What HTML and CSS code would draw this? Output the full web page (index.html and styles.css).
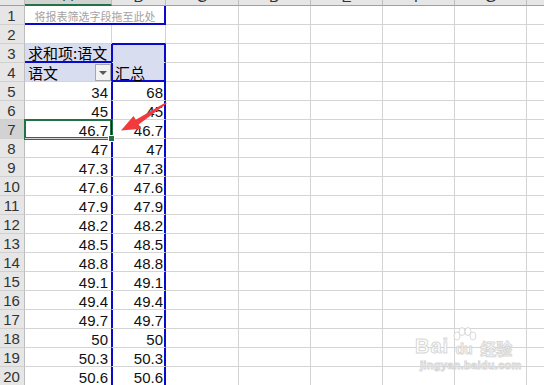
FILE: index.html
```html
<!DOCTYPE html>
<html lang="zh">
<head>
<meta charset="utf-8">
<link rel="stylesheet" href="styles.css">
</head>
<body>
<div class="page">
  <div class="sheet">
    <div class="c corner"></div>
    <div class="c ch sel">A</div><div class="c ch">B</div><div class="c ch">C</div><div class="c ch">D</div><div class="c ch">E</div><div class="c ch">F</div><div class="c ch">G</div><div class="c ch">H</div>

    <div class="c rh">1</div>
    <div class="c filter">将报表筛选字段拖至此处</div>
    <div class="c"></div><div class="c"></div><div class="c"></div><div class="c"></div><div class="c"></div><div class="c"></div>

    <div class="c rh">2</div>
    <div class="c"></div><div class="c b2"></div>
    <div class="c"></div><div class="c"></div><div class="c"></div><div class="c"></div><div class="c"></div><div class="c"></div>

    <div class="c rh">3</div>
    <div class="c a3 txt">求和项:语文</div><div class="c b3"></div>
    <div class="c"></div><div class="c"></div><div class="c"></div><div class="c"></div><div class="c"></div><div class="c"></div>

    <div class="c rh">4</div>
    <div class="c a4 txt">语文<span class="dd"><span class="tri"></span></span></div><div class="c b4 txt">汇总</div>
    <div class="c"></div><div class="c"></div><div class="c"></div><div class="c"></div><div class="c"></div><div class="c"></div>

    <div class="c rh">5</div>
    <div class="c num pa">34</div><div class="c num pb">68</div>
    <div class="c"></div><div class="c"></div><div class="c"></div><div class="c"></div><div class="c"></div><div class="c"></div>

    <div class="c rh">6</div>
    <div class="c num pa">45</div><div class="c num pb">45</div>
    <div class="c"></div><div class="c"></div><div class="c"></div><div class="c"></div><div class="c"></div><div class="c"></div>

    <div class="c rh cur">7</div>
    <div class="c num pa active">46.7</div><div class="c num pb">46.7</div>
    <div class="c"></div><div class="c"></div><div class="c"></div><div class="c"></div><div class="c"></div><div class="c"></div>

    <div class="c rh">8</div>
    <div class="c num pa">47</div><div class="c num pb">47</div>
    <div class="c"></div><div class="c"></div><div class="c"></div><div class="c"></div><div class="c"></div><div class="c"></div>

    <div class="c rh">9</div>
    <div class="c num pa">47.3</div><div class="c num pb">47.3</div>
    <div class="c"></div><div class="c"></div><div class="c"></div><div class="c"></div><div class="c"></div><div class="c"></div>

    <div class="c rh">10</div>
    <div class="c num pa">47.6</div><div class="c num pb">47.6</div>
    <div class="c"></div><div class="c"></div><div class="c"></div><div class="c"></div><div class="c"></div><div class="c"></div>

    <div class="c rh">11</div>
    <div class="c num pa">47.9</div><div class="c num pb">47.9</div>
    <div class="c"></div><div class="c"></div><div class="c"></div><div class="c"></div><div class="c"></div><div class="c"></div>

    <div class="c rh">12</div>
    <div class="c num pa">48.2</div><div class="c num pb">48.2</div>
    <div class="c"></div><div class="c"></div><div class="c"></div><div class="c"></div><div class="c"></div><div class="c"></div>

    <div class="c rh">13</div>
    <div class="c num pa">48.5</div><div class="c num pb">48.5</div>
    <div class="c"></div><div class="c"></div><div class="c"></div><div class="c"></div><div class="c"></div><div class="c"></div>

    <div class="c rh">14</div>
    <div class="c num pa">48.8</div><div class="c num pb">48.8</div>
    <div class="c"></div><div class="c"></div><div class="c"></div><div class="c"></div><div class="c"></div><div class="c"></div>

    <div class="c rh">15</div>
    <div class="c num pa">49.1</div><div class="c num pb">49.1</div>
    <div class="c"></div><div class="c"></div><div class="c"></div><div class="c"></div><div class="c"></div><div class="c"></div>

    <div class="c rh">16</div>
    <div class="c num pa">49.4</div><div class="c num pb">49.4</div>
    <div class="c"></div><div class="c"></div><div class="c"></div><div class="c"></div><div class="c"></div><div class="c"></div>

    <div class="c rh">17</div>
    <div class="c num pa">49.7</div><div class="c num pb">49.7</div>
    <div class="c"></div><div class="c"></div><div class="c"></div><div class="c"></div><div class="c"></div><div class="c"></div>

    <div class="c rh">18</div>
    <div class="c num pa">50</div><div class="c num pb">50</div>
    <div class="c"></div><div class="c"></div><div class="c"></div><div class="c"></div><div class="c"></div><div class="c"></div>

    <div class="c rh">19</div>
    <div class="c num pa">50.3</div><div class="c num pb">50.3</div>
    <div class="c"></div><div class="c"></div><div class="c"></div><div class="c"></div><div class="c"></div><div class="c"></div>

    <div class="c rh">20</div>
    <div class="c num pa">50.6</div><div class="c num pb">50.6</div>
    <div class="c"></div><div class="c"></div><div class="c"></div><div class="c"></div><div class="c"></div><div class="c"></div>
  </div>

  <svg class="arrow" width="544" height="385" viewBox="0 0 544 385">
    <polygon points="121,130.5 133.5,116 135.8,119.8 166,102.3 166.6,103.8 138.6,124.4 141.5,128.8" fill="#f03a3b"/>
  </svg>

  <div class="wm">
    <div class="wm-top">
      <span class="wm-bai">Bai</span>
      <span class="wm-paw">
        <svg width="28" height="18" viewBox="0 0 28 18">
          <ellipse cx="7" cy="9" rx="3" ry="4" fill="#fff" stroke="#d6d6d6"/>
          <ellipse cx="12" cy="4.5" rx="3" ry="4" fill="#fff" stroke="#d6d6d6"/>
          <ellipse cx="18" cy="4.5" rx="3" ry="4" fill="#fff" stroke="#d6d6d6"/>
          <ellipse cx="23" cy="9" rx="3" ry="4" fill="#fff" stroke="#d6d6d6"/>
        </svg>
        <span class="wm-du">du</span>
      </span>
      <span class="wm-jy">经验</span>
    </div>
    <div class="wm-url">jingyan.baidu.com</div>
  </div>
</div>
</body>
</html>
```

FILE: styles.css
```css
html, body {
  margin: 0;
  padding: 0;
  background: #ffffff;
  overflow: hidden;
}

.page {
  position: relative;
  width: 544px;
  height: 385px;
  overflow: hidden;
}

.sheet {
  display: grid;
  grid-template-columns: 25px 87px 54px 73px 72px 72px 72px 72px 72px;
  grid-template-rows: 21px repeat(20, 19px);
  margin-top: -15px;
  font-family: "Liberation Sans", "Noto Sans CJK SC", sans-serif;
  font-size: 15px;
  color: #111;
}

.c {
  box-sizing: border-box;
  border-right: 1px solid #d4d4d4;
  border-bottom: 1px solid #d4d4d4;
  background: #fff;
  display: flex;
  align-items: flex-end;
  min-width: 0;
  overflow: visible;
  white-space: nowrap;
}

/* headers */
.corner {
  background: #e6e6e6;
  border-right-color: #bdbdbd;
  border-bottom-color: #9f9f9f;
}
.ch {
  background: #e6e6e6;
  border-right-color: #bdbdbd;
  border-bottom-color: #9f9f9f;
  justify-content: center;
  line-height: 1;
  color: #333;
  padding-bottom: 1px;
}
.ch.sel {
  background: #d2d2d2;
  border-bottom: 2px solid #217346;
  color: #1f5f3a;
}
.rh {
  background: #e6e6e6;
  border-right-color: #bdbdbd;
  border-bottom-color: #d0d0d0;
  justify-content: center;
  font-size: 15px;
  line-height: 1;
  color: #333;
  padding-bottom: 1px;
  padding-right: 1px;
}
.rh.cur {
  background: #d2d2d2;
}

/* filter drop zone */
.filter {
  grid-column: span 2;
  justify-content: center;
  align-items: center;
  font-family: "Noto Sans CJK SC", sans-serif;
  font-size: 11px;
  color: #a3a3a3;
  border-right-color: #0a0acc;
  border-bottom-color: #0a0acc;
  box-shadow: inset -1px 0 #0a0acc, inset 0 -1px #0a0acc;
  padding-top: 1px;
}

/* pivot header */
.txt {
  font-family: "Noto Sans CJK SC", sans-serif;
  font-size: 15px;
  line-height: 1;
  padding-left: 3px;
  color: #000;
}
.a3 {
  background: #d9ddf0;
  border-right-color: #0a0acc;
  border-bottom-color: #0a0acc;
  box-shadow: inset 0 -1px #0a0acc;
  padding-bottom: 2px;
}
.a4 {
  background: #d9ddf0;
  border-right-color: #0a0acc;
  justify-content: space-between;
  align-items: flex-end;
  padding-right: 0;
  padding-bottom: 1px;
}
.b4 {
  padding-bottom: 1px;
}
.dd {
  box-sizing: border-box;
  width: 16px;
  height: 17px;
  margin-bottom: -1px;
  background: #f2f2f2;
  border: 1px solid #a6a6a6;
  display: flex;
  align-items: center;
  justify-content: center;
}
.tri {
  width: 0;
  height: 0;
  border-left: 4px solid transparent;
  border-right: 4px solid transparent;
  border-top: 4px solid #5a5a5a;
}
.b2 {
  border-bottom-color: #0a0acc;
}
.b3 {
  background: #d9ddf0;
  border-right-color: #0a0acc;
  border-bottom-color: #d9ddf0;
  box-shadow: inset 1px 0 #0a0acc, inset -1px 0 #0a0acc, inset 0 1px #0a0acc;
}
.b4 {
  background: #d9ddf0;
  border-right-color: #0a0acc;
  border-bottom-color: #0a0acc;
  box-shadow: inset 1px 0 #0a0acc, inset -1px 0 #0a0acc, inset 0 -1px #0a0acc;
}

/* data */
.num {
  justify-content: flex-end;
  line-height: 1;
  padding-right: 2px;
}
.pa {
  border-right-color: #0a0acc;
  padding-right: 3px;
}
.pb {
  border-right-color: #0a0acc;
  box-shadow: inset 1px 0 #0a0acc, inset -1px 0 #0a0acc;
  padding-right: 2px;
}
.active {
  position: relative;
  z-index: 1;
  box-shadow: 0 0 0 1px #217346, inset 0 0 0 1px #217346;
}
.active::after {
  content: "";
  position: absolute;
  right: -4px;
  bottom: -4px;
  width: 5px;
  height: 5px;
  background: #217346;
  border: 1px solid #fff;
}

/* arrow overlay */
.arrow {
  position: absolute;
  left: 0;
  top: 0;
  pointer-events: none;
}

/* watermark */
.wm {
  position: absolute;
  left: 415px;
  top: 325px;
  width: 105px;
  font-family: "Liberation Sans", "Noto Sans CJK SC", sans-serif;
  color: #ffffff;
  -webkit-text-stroke: 1px #d4d4d4;
  opacity: 0.9;
}
.wm-top {
  display: flex;
  align-items: flex-end;
  height: 31px;
}
.wm-bai {
  font-size: 20px;
  font-weight: bold;
  line-height: 1;
  letter-spacing: 1px;
}
.wm-paw {
  display: flex;
  flex-direction: column;
  align-items: center;
  width: 28px;
  margin-left: 1px;
}
.wm-paw svg {
  display: block;
}
.wm-du {
  font-size: 14px;
  font-weight: bold;
  line-height: 1;
  margin-top: -3px;
}
.wm-jy {
  font-family: "Noto Sans CJK SC", sans-serif;
  font-size: 16px;
  font-weight: bold;
  line-height: 1;
  margin-left: 2px;
}
.wm-url {
  font-size: 11px;
  font-weight: bold;
  letter-spacing: 0.3px;
  margin-top: 3px;
  padding-left: 5px;
}
```
